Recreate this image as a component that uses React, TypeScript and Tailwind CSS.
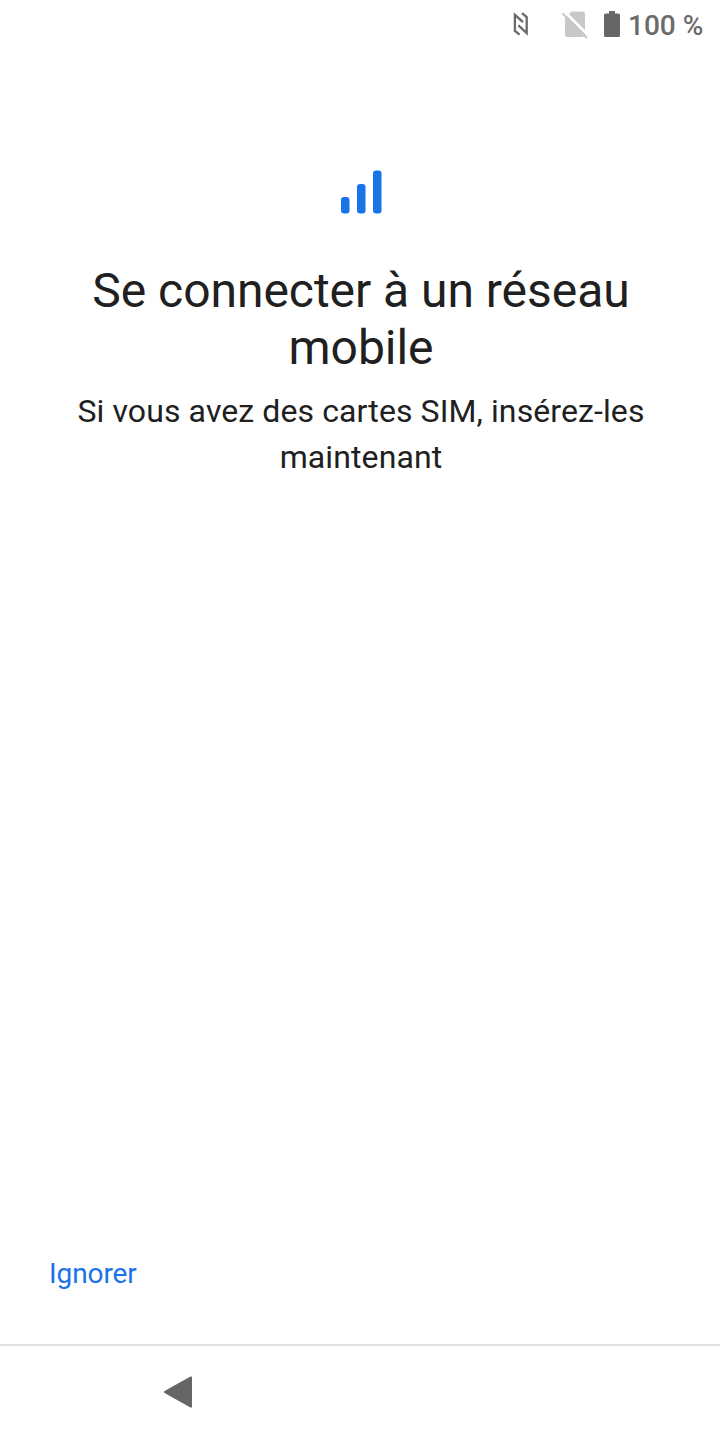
function NfcIcon() {
  return (
    <svg className="h-[26px] w-[18px]" viewBox="0 0 18 26" fill="none" stroke="#6a6a6a" strokeWidth="2.3">
      <path d="M7.6 23.6 2.9 19.9V3.8L11 11.2" />
      <path d="M10 2.2 14.7 6V22.1L6.4 14.4" />
    </svg>
  );
}

function NoSimIcon() {
  return (
    <svg className="h-[28px] w-[28px]" viewBox="0 0 28 28">
      <path d="M9.5 0.5H20.5Q23 0.5 23 3V23.5Q23 26 20.5 26H5.5Q3 26 3 23.5V7Z" fill="#c8c8c8" />
      <path d="M2 0 28 26" stroke="#fff" strokeWidth="2.6" />
      <path d="M0.5 2.5 25 27" stroke="#c8c8c8" strokeWidth="2.2" />
    </svg>
  );
}

function BatteryIcon() {
  return (
    <svg className="h-[27px] w-[16px]" viewBox="0 0 16 27" fill="#666">
      <path d="M5 0H11V2.5H14.5Q16 2.5 16 4V24.5Q16 26 14.5 26H1.5Q0 26 0 24.5V4Q0 2.5 1.5 2.5H5Z" />
    </svg>
  );
}

function SignalIcon() {
  return (
    <svg className="h-[44px] w-[42px]" viewBox="0 0 42 44" fill="#1a73e8">
      <rect x="1" y="27" width="8.5" height="16.5" rx="3" />
      <rect x="17" y="14" width="8.5" height="29.5" rx="3" />
      <rect x="33" y="0.5" width="8.5" height="43" rx="3" />
    </svg>
  );
}

function StatusBar() {
  return (
    <header className="flex h-12 items-start pl-[512px] pt-[11px]">
      <NfcIcon />
      <div className="ml-[32px]">
        <NoSimIcon />
      </div>
      <div className="ml-[14px]">
        <BatteryIcon />
      </div>
      <span className="ml-[8px] mt-px whitespace-nowrap text-[28px] font-medium leading-[28px] text-[#6b6b6b]">
        100 %
      </span>
    </header>
  );
}

export default function App() {
  return (
    <div className="flex h-[1440px] w-[720px] flex-col overflow-hidden bg-white font-['Roboto',sans-serif] text-[#202020] antialiased">
      <StatusBar />

      <main className="flex flex-1 flex-col items-center pl-[2px] pt-[122px] text-center">
        <SignalIcon />
        <h1 className="mt-[48px] whitespace-nowrap text-[48px] font-normal leading-[57px] tracking-[-0.04px]">
          Se connecter à un réseau
          <br />
          mobile
        </h1>
        <p className="mt-[12px] whitespace-nowrap text-[32px] leading-[46px] tracking-[0.1px]">
          Si vous avez des cartes SIM, insérez-les
          <br />
          maintenant
        </p>
        <button className="mb-[53px] ml-[47px] mt-auto self-start text-[28px] leading-[34px] tracking-[-0.08px] text-[#1a73e8]">
          Ignorer
        </button>
      </main>

      <nav className="flex h-24 items-start border-t-2 border-[#e0e0e0] pl-[163px] pt-[29px]">
        <button aria-label="Retour">
          <svg className="h-[34px] w-[30px]" viewBox="0 0 30 34" fill="#666">
            <path d="M1.5 16 27.5 1.5Q29 1 29 2.5V31.5Q29 33 27.5 32.5L1.5 18Q0 17 1.5 16Z" />
          </svg>
        </button>
      </nav>
    </div>
  );
}
